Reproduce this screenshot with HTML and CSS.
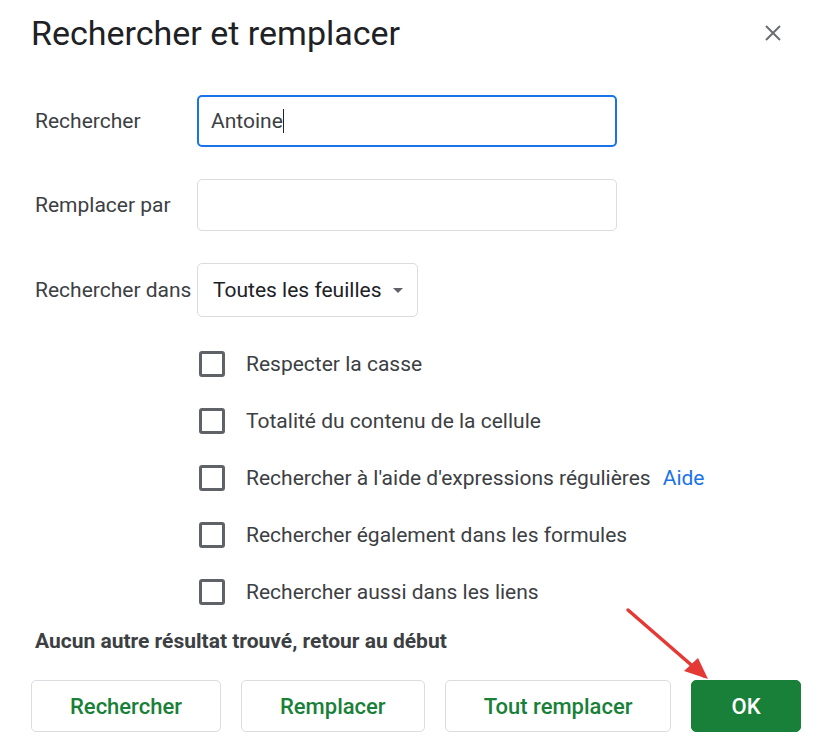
FILE: index.html
```html
<!DOCTYPE html>
<html lang="fr">
<head>
  <meta charset="UTF-8">
  <title>Rechercher et remplacer</title>
  <link rel="stylesheet" href="styles.css">
</head>
<body>

  <div class="dialogue">

    <div class="entete">
      <h1 class="titre">Rechercher et remplacer</h1>
      <button class="fermer" aria-label="Fermer">
        <svg width="18" height="18" viewBox="0 0 18 18">
          <path d="M2 2 L16 16 M16 2 L2 16" stroke="#6b6e72" stroke-width="2" fill="none"/>
        </svg>
      </button>
    </div>

    <!-- champs de saisie -->
    <div class="champs">
      <label class="libelle">Rechercher</label>
      <div class="saisie actif">Antoine<span class="curseur"></span></div>

      <label class="libelle">Remplacer par</label>
      <div class="saisie"></div>

      <label class="libelle">Rechercher dans</label>
      <div class="liste">
        Toutes les feuilles
        <span class="fleche"></span>
      </div>
    </div>

    <!-- options -->
    <div class="options">
      <div class="option"><span class="case"></span>Respecter la casse</div>
      <div class="option"><span class="case"></span>Totalité du contenu de la cellule</div>
      <div class="option"><span class="case"></span>Rechercher à l'aide d'expressions régulières <a class="aide" href="#">Aide</a></div>
      <div class="option"><span class="case"></span>Rechercher également dans les formules</div>
      <div class="option"><span class="case"></span>Rechercher aussi dans les liens</div>
    </div>

    <div class="message">Aucun autre résultat trouvé, retour au début</div>

    <div class="boutons">
      <button class="bouton">Rechercher</button>
      <button class="bouton">Remplacer</button>
      <button class="bouton">Tout remplacer</button>
      <button class="bouton principal">OK
        <svg class="indication" width="100" height="90" viewBox="0 0 100 90">
          <path d="M4 4 L80 70" stroke="#e53935" stroke-width="3.5" stroke-linecap="round" fill="none"/>
          <path d="M84 73 L60 65 L74 52 Z" fill="#e53935"/>
        </svg>
      </button>
    </div>

  </div>

</body>
</html>
```

FILE: styles.css
```css
body {
  margin: 0;
  background-color: white;
  font-family: Roboto, "Noto Sans", Arial, sans-serif;
  color: #3c4043;
}
.dialogue {
  width: 819px;
  height: 751px;
  box-sizing: border-box;
  padding: 0 23px 0 31px;
}
.entete {
  height: 66px;
  display: flex;
  align-items: center;
  justify-content: space-between;
}
.titre {
  margin: 0;
  font-weight: 400;
  font-size: 34px;
  color: #202124;
}
.fermer {
  background: none;
  border: none;
  padding: 0;
  margin-right: 14px;
  display: flex;
}
.champs {
  margin-top: 29px;
  display: grid;
  grid-template-columns: 166px 420px;
  row-gap: 32px;
  align-items: center;
}
.libelle {
  padding-left: 4px;
  font-size: 21px;
  color: #3c4043;
}
.saisie {
  height: 52px;
  box-sizing: border-box;
  border: 1px solid #dadce0;
  border-radius: 5px;
  padding: 0 14px;
  display: flex;
  align-items: center;
  font-size: 21px;
  color: #3c4043;
}
.saisie.actif {
  border: 2px solid #1a73e8;
  padding: 0 12px;
}
.curseur {
  display: inline-block;
  width: 1px;
  height: 24px;
  background-color: #202124;
}
.liste {
  justify-self: start;
  height: 54px;
  box-sizing: border-box;
  border: 1px solid #dadce0;
  border-radius: 5px;
  padding: 0 14px 0 15px;
  display: flex;
  align-items: center;
  gap: 12px;
  font-size: 21px;
  color: #202124;
}
.fleche {
  width: 0;
  height: 0;
  border-left: 5px solid transparent;
  border-right: 5px solid transparent;
  border-top: 5px solid #5f6368;
}
.options {
  margin-top: 18px;
  padding-left: 168px;
}
.option {
  height: 57px;
  display: flex;
  align-items: center;
  font-size: 21px;
  color: #3c4043;
}
.case {
  width: 20px;
  height: 20px;
  border: 3px solid #5f6368;
  border-radius: 3px;
  margin-right: 21px;
}
.aide {
  margin-left: 12px;
  color: #1a73e8;
  text-decoration: none;
}
.message {
  margin-top: 9px;
  padding-left: 4px;
  line-height: 24px;
  font-size: 21px;
  font-weight: bold;
  color: #3c4043;
}
.boutons {
  margin-top: 27px;
  display: flex;
  gap: 20px;
}
.bouton {
  position: relative;
  flex-shrink: 0;
  white-space: nowrap;
  height: 52px;
  padding: 0 38px;
  background-color: white;
  border: 1px solid #dadce0;
  border-radius: 5px;
  font-family: inherit;
  font-size: 22px;
  font-weight: 500;
  color: #188038;
}
.bouton.principal {
  background-color: #188038;
  border-color: #188038;
  color: white;
  padding: 0 39px;
}
.indication {
  position: absolute;
  left: -68px;
  top: -75px;
}
```
